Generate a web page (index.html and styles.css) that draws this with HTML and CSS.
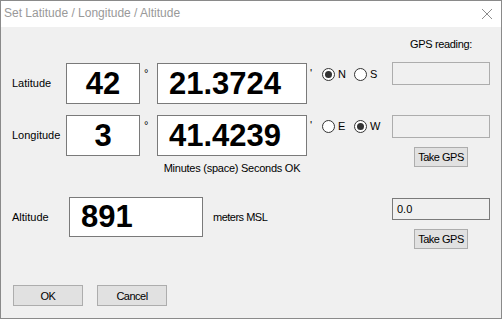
FILE: index.html
```html
<!DOCTYPE html>
<html lang="en">
<head>
  <meta charset="UTF-8" />
  <title>Set Latitude / Longitude / Altitude</title>
  <link rel="stylesheet" href="styles.css">
</head>
<body>
  <div class="window">
    <div class="titlebar">
      <span class="title">Set Latitude / Longitude / Altitude</span>
      <svg class="close" width="10" height="10" viewBox="0 0 10 10">
        <path d="M0 0 L10 10 M10 0 L0 10" stroke="#8c8c8c" stroke-width="1" fill="none" />
      </svg>
    </div>
    <div class="client">
      <div class="upper">
        <div class="fields">
          <div class="coord-row">
            <span class="row-label">Latitude</span>
            <div class="box deg-box">42</div>
            <span class="mark">&deg;</span>
            <div class="box min-box">21.3724</div>
            <span class="mark quote">'</span>
            <div class="radios">
              <label class="radio"><i class="dot checked"></i>N</label>
              <label class="radio"><i class="dot"></i>S</label>
            </div>
          </div>
          <div class="coord-row lon">
            <span class="row-label">Longitude</span>
            <div class="box deg-box">3</div>
            <span class="mark">&deg;</span>
            <div class="box min-box">41.4239</div>
            <span class="mark quote">'</span>
            <div class="radios">
              <label class="radio"><i class="dot"></i>E</label>
              <label class="radio"><i class="dot checked"></i>W</label>
            </div>
          </div>
          <div class="hint">Minutes (space) Seconds OK</div>
          <div class="alt-row">
            <span class="row-label alt-label">Altitude</span>
            <div class="box alt-box">891</div>
            <span class="unit">meters MSL</span>
          </div>
        </div>
        <div class="gps">
          <div class="gps-title">GPS reading:</div>
          <div class="gps-field lat-gps"></div>
          <div class="gps-field lon-gps"></div>
          <button class="btn take-gps first">Take GPS</button>
          <div class="gps-field alt-gps">0.0</div>
          <button class="btn take-gps">Take GPS</button>
        </div>
      </div>
      <div class="actions">
        <button class="btn action">OK</button>
        <button class="btn action">Cancel</button>
      </div>
    </div>
  </div>
</body>
</html>
```

FILE: styles.css
```css
* { box-sizing: border-box; }
body {
  margin: 0;
  background: #fff;
  font-family: 'Liberation Sans', Arial, sans-serif;
  font-size: 11px;
  color: #000;
}
.window {
  width: 502px;
  height: 319px;
  border: 1px solid #8a8a8a;
  display: flex;
  flex-direction: column;
}
.titlebar {
  height: 26px;
  background: #fff;
  display: flex;
  align-items: center;
  padding: 0 9px 2px 3px;
}
.title {
  flex: 1;
  font-size: 12px;
  color: #999;
}
.close { margin-top: 2px; }
.client {
  flex: 1;
  background: #f0f0f0;
  display: flex;
  flex-direction: column;
  padding: 0 10px 12px 11px;
}
.upper { display: flex; }
.fields {
  width: 380px;
  padding-top: 36px;
}
.coord-row {
  display: flex;
  align-items: center;
  height: 41px;
}
.coord-row.lon { margin-top: 11px; }
.row-label { width: 54px; line-height: 13px; }
.box {
  height: 41px;
  background: #fff;
  border: 1px solid #7a7a7a;
  display: flex;
  align-items: center;
  font-size: 31px;
  font-weight: bold;
}
.deg-box { width: 74px; justify-content: center; }
.min-box { width: 150px; padding-left: 11px; }
.mark {
  align-self: flex-start;
  width: 17px;
  padding: 4px 0 0 4px;
  line-height: 13px;
}
.mark.quote { width: 15px; padding-left: 3px; }
.radios {
  align-self: flex-start;
  display: flex;
  padding-top: 5px;
}
.radio {
  width: 32px;
  display: flex;
  align-items: center;
  line-height: 13px;
}
.dot {
  position: relative;
  width: 13px;
  height: 13px;
  margin-right: 3px;
  border: 1px solid #333;
  border-radius: 50%;
  background: #fff;
}
.dot.checked::after {
  content: '';
  position: absolute;
  left: 2px;
  top: 2px;
  width: 7px;
  height: 7px;
  border-radius: 50%;
  background: #333;
}
.hint {
  width: 150px;
  margin: 6px 0 0 145px;
  line-height: 13px;
  text-align: center;
  white-space: nowrap;
  letter-spacing: -0.25px;
}
.alt-row {
  display: flex;
  align-items: center;
  margin-top: 22px;
}
.alt-label { width: 57px; }
.alt-box {
  width: 134px;
  height: 40px;
  padding-left: 11px;
}
.unit {
  margin-left: 10px;
  letter-spacing: -0.5px;
}
.gps {
  width: 98px;
  display: flex;
  flex-direction: column;
  padding-top: 11px;
}
.gps-title {
  line-height: 13px;
  text-align: center;
  letter-spacing: -0.35px;
}
.gps-field {
  height: 23px;
  border: 1px solid #adadad;
  background: #f0f0f0;
}
.lat-gps { margin-top: 11px; }
.lon-gps { margin-top: 30px; }
.alt-gps {
  height: 22px;
  margin-top: 31px;
  border-color: #7a7a7a;
  padding: 4px 0 0 4px;
  line-height: 13px;
}
.btn {
  height: 20px;
  padding: 0;
  background: #e1e1e1;
  border: 1px solid #adadad;
  font-family: inherit;
  font-size: 11px;
  color: #000;
  letter-spacing: -0.5px;
}
.take-gps {
  width: 54px;
  align-self: center;
  margin-top: 9px;
}
.actions {
  margin-top: auto;
  display: flex;
  gap: 14px;
  padding-left: 1px;
}
.action { width: 70px; height: 21px; }
```
